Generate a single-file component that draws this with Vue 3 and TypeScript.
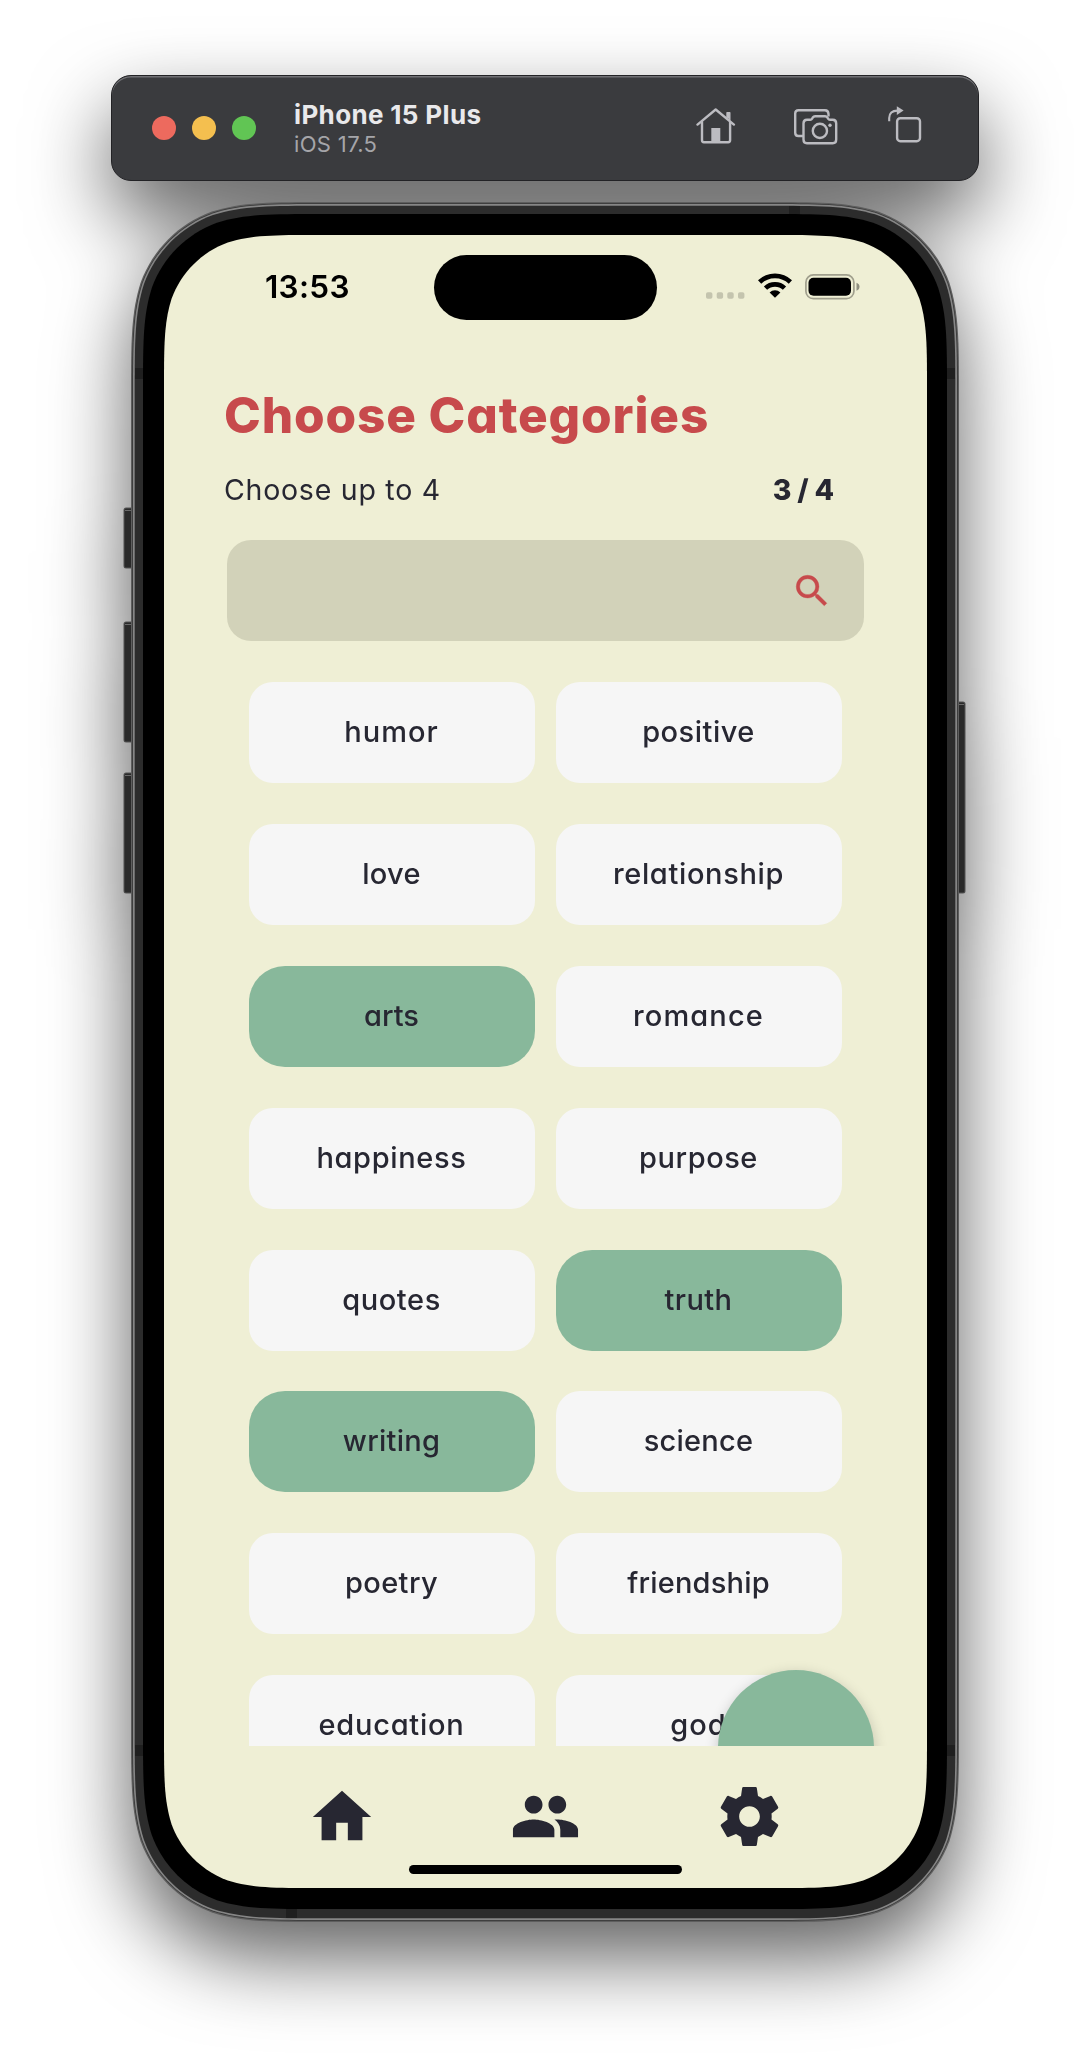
<script setup lang="ts">
interface Category {
  name: string
  selected?: boolean
  tracking: number
}

const categories: Category[] = [
  { name: 'humor', tracking: 1 },
  { name: 'positive', tracking: 0.5 },
  { name: 'love', tracking: 0.3 },
  { name: 'relationship', tracking: 0.65 },
  { name: 'arts', selected: true, tracking: 0 },
  { name: 'romance', tracking: 1.1 },
  { name: 'happiness', tracking: 0.65 },
  { name: 'purpose', tracking: 0.55 },
  { name: 'quotes', tracking: 0.6 },
  { name: 'truth', selected: true, tracking: 0.4 },
  { name: 'writing', selected: true, tracking: 0.25 },
  { name: 'science', tracking: 0.25 },
  { name: 'poetry', tracking: 0.4 },
  { name: 'friendship', tracking: 0.2 },
  { name: 'education', tracking: 0.75 },
  { name: 'god', tracking: 1 },
]

const limit = 4
const chosen = categories.filter((c) => c.selected).length

// Rounded rectangle with continuous-curvature corners.
function squircle(x: number, y: number, w: number, h: number, r: number): string {
  const a = 1.528665 * r
  const b = 1.088493 * r
  const c = 0.868407 * r
  const d = 0.631494 * r
  const e = 0.074911 * r
  const f = 0.372824 * r
  const g = 0.16906 * r
  const R = x + w
  const B = y + h
  return [
    `M${x + a} ${y}H${R - a}`,
    `C${R - b} ${y} ${R - c} ${y} ${R - d} ${y + e}`,
    `C${R - f} ${y + g} ${R - g} ${y + f} ${R - e} ${y + d}`,
    `C${R} ${y + c} ${R} ${y + b} ${R} ${y + a}`,
    `V${B - a}`,
    `C${R} ${B - b} ${R} ${B - c} ${R - e} ${B - d}`,
    `C${R - g} ${B - f} ${R - f} ${B - g} ${R - d} ${B - e}`,
    `C${R - c} ${B} ${R - b} ${B} ${R - a} ${B}`,
    `H${x + a}`,
    `C${x + b} ${B} ${x + c} ${B} ${x + d} ${B - e}`,
    `C${x + f} ${B - g} ${x + g} ${B - f} ${x + e} ${B - d}`,
    `C${x} ${B - c} ${x} ${B - b} ${x} ${B - a}`,
    `V${y + a}`,
    `C${x} ${y + b} ${x} ${y + c} ${x + e} ${y + d}`,
    `C${x + g} ${y + f} ${x + f} ${y + g} ${x + d} ${y + e}`,
    `C${x + c} ${y} ${x + b} ${y} ${x + a} ${y}Z`,
  ].join('')
}

const shell = squircle(-1, -1, 828, 1720, 128)
const rim = squircle(0.2, 0.2, 825.6, 1717.6, 127)
const seam = squircle(1, 1, 824, 1716, 126)
const band = squircle(2.7, 2.7, 820.6, 1712.6, 124)
const bezel = squircle(11, 11, 804, 1695, 117)
const display = squircle(32, 32, 763, 1653, 101)

const sideButtons = [
  { x: -8, y: 305, h: 60 },
  { x: -8, y: 419, h: 120 },
  { x: -8, y: 570, h: 120 },
  { x: 824, y: 499, h: 191 },
]
</script>

<template>
  <div class="simulator">
    <div class="window">
      <header class="toolbar">
        <div class="lights">
          <span class="light close"></span>
          <span class="light minimise"></span>
          <span class="light expand"></span>
        </div>
        <div class="device">
          <div class="device-name">iPhone 15 Plus</div>
          <div class="device-os">iOS 17.5</div>
        </div>
        <div class="tools">
          <svg class="tool-home" width="40" height="36" viewBox="0 0 40 36" fill="none" stroke="#bcbcc1" stroke-width="2.4" stroke-linecap="round" stroke-linejoin="round">
            <path d="M1.5 16.6 19.700 1.500 37.900 16.600" />
            <path d="M6 14v18.300q0 1.900 1.900 1.900h24.300q1.900 0 1.900-1.900V14" />
            <path d="M31 9.500V4.800h2.800v7" fill="#bcbcc1" stroke-width="1.400" />
            <path d="M15.300 20h9v14h-9z" fill="#bcbcc1" stroke="none" />
          </svg>
          <svg class="tool-camera" width="44" height="36" viewBox="0 0 44 36" fill="none" stroke="#bcbcc1" stroke-width="2.400" stroke-linejoin="round">
            <path d="M9 27H4.500Q1.200 27 1.200 23.700V4.500Q1.200 1.200 4.500 1.200H31Q34.300 1.200 34.500 5V7.500" />
            <path d="M9.500 14.500q0-3.700 3.400-3.700h3.300q1.300 0 1.900-1.100l.7-1.200q.8-1.300 2.300-1.300h10q1.500 0 2.300 1.300l.7 1.200q.6 1.100 1.900 1.100h2.800q3.400 0 3.400 3.700v16q0 3.700-3.400 3.700h-25.900q-3.400 0-3.400-3.700z" />
            <circle cx="25.900" cy="21.900" r="7.100" />
            <circle cx="36" cy="16.300" r="1.700" fill="#bcbcc1" stroke="none" />
          </svg>
          <svg class="tool-rotate" width="34" height="37" viewBox="0 0 34 37" fill="none" stroke="#bcbcc1" stroke-width="2.400">
            <rect x="9.100" y="12.200" width="22.900" height="23" rx="3.200" />
            <path d="M1.200 15.300V12Q1.200 4.600 9.500 4.600" stroke-width="2.100" />
            <path d="M8.800 .2 15.600 4.600 8.800 9z" fill="#bcbcc1" stroke="none" />
          </svg>
        </div>
      </header>

      <main class="phone">
        <svg class="chassis" width="846" height="1718" viewBox="-10 0 846 1718">
          <g v-for="b in sideButtons" :key="`${b.x}-${b.y}`">
            <rect :x="b.x - 0.5" :y="b.y - 0.5" width="10" :height="b.h + 1" rx="2.500" fill="#555" />
            <rect :x="b.x + 0.5" :y="b.y + 0.5" width="8" :height="b.h - 1" rx="1.500" fill="#2a2a2a" />
            <rect :x="b.x + 1" :y="b.y + 2" width="7" height="1" fill="#6a6a6a" />
          </g>
          <path :d="shell" fill="#5e5e5e" />
          <path :d="rim" fill="#363636" />
          <path :d="seam" fill="#868686" />
          <path :d="band" fill="#2c2c2c" />
          <g fill="#1f1f1f">
            <rect x="657" y="3" width="11" height="9" />
            <rect x="154" y="1705" width="11" height="10" />
            <rect x="3" y="165" width="9" height="11" />
            <rect x="814" y="165" width="9" height="11" />
            <rect x="3" y="1542" width="9" height="11" />
            <rect x="814" y="1542" width="9" height="11" />
          </g>
          <path :d="bezel" fill="#000" />
          <path :d="display" fill="#efefd5" />
        </svg>

        <div class="screen">
          <div class="status">
            <span class="clock">13:53</span>
            <span class="island"></span>
            <div class="indicators">
              <svg class="cellular" width="39" height="7" viewBox="0 0 39 7" fill="#c4c4ae">
                <rect x="0" y=".3" width="6.400" height="6.400" rx="1.800" />
                <rect x="10.700" y=".3" width="6.400" height="6.400" rx="1.800" />
                <rect x="21.300" y=".3" width="6.400" height="6.400" rx="1.800" />
                <rect x="32" y=".3" width="6.400" height="6.400" rx="1.800" />
              </svg>
              <svg class="wifi" width="34" height="25" viewBox="0 0 34 25">
                <g fill="none" stroke="#000" stroke-width="4.700">
                  <path d="M1.600 9A22.200 22.200 0 0 1 32.400 9" />
                  <path d="M7.500 15.100A13.800 13.800 0 0 1 26.500 15.100" />
                </g>
                <path d="M17 24.800 11.600 19.400A7.700 7.700 0 0 1 22.400 19.400Z" />
              </svg>
              <svg class="battery" width="55" height="26" viewBox="0 0 55 26">
                <rect x=".9" y=".9" width="48" height="23.800" rx="7.500" fill="none" stroke="#a09f8d" stroke-width="1.700" />
                <rect x="3.500" y="3.700" width="42.500" height="18" rx="5" />
                <path d="M51.500 8.800q3 1.200 3 4t-3 4z" fill="#8f8f80" />
              </svg>
            </div>
          </div>

          <section class="content">
            <h1>Choose Categories</h1>
            <div class="summary">
              <span class="hint">Choose up to {{ limit }}</span>
              <span class="count">{{ chosen }} / {{ limit }}</span>
            </div>
            <div class="search">
              <svg width="42" height="42" viewBox="0 0 24 24" fill="#c74a4c">
                <path d="M15.500 14h-.79l-.28-.27A6.471 6.471 0 0 0 16 9.500 6.500 6.500 0 1 0 9.500 16c1.610 0 3.090-.59 4.230-1.570l.27.28v.79l5 4.990L20.490 19l-4.990-5zm-6 0C7.010 14 5 11.990 5 9.500S7.010 5 9.500 5 14 7.010 14 9.500 11.990 14 9.500 14z" stroke="#c74a4c" stroke-width=".2" stroke-linejoin="round" />
              </svg>
            </div>
            <div class="viewport">
              <div class="grid">
                <button
                  v-for="c in categories"
                  :key="c.name"
                  class="category"
                  :class="{ selected: c.selected }"
                  :style="{ letterSpacing: `${c.tracking}px` }"
                >
                  {{ c.name }}
                </button>
              </div>
              <span class="fab"></span>
            </div>
          </section>

          <nav class="tabs">
            <svg class="tab-home" width="70" height="70" viewBox="0 0 24 24"><path d="M10 20v-6h4v6h5v-8h3L12 3 2 12h3v8z" /></svg>
            <svg width="71" height="71" viewBox="0 0 24 24"><path d="M16 11c1.660 0 2.990-1.340 2.990-3S17.660 5 16 5s-3 1.340-3 3 1.340 3 3 3zm-8 0c1.660 0 2.990-1.340 2.990-3S9.660 5 8 5 5 6.340 5 8s1.340 3 3 3zm0 2c-2.330 0-7 1.170-7 3.500V19h14v-2.500c0-2.330-4.670-3.500-7-3.500zm8 0c-.29 0-.62.02-.97.05 1.160.84 1.970 1.970 1.970 3.450V19h6v-2.500c0-2.330-4.670-3.500-7-3.500z" /></svg>
            <svg width="71" height="71" viewBox="0 0 24 24"><path d="M19.430 12.980c.04-.32.07-.64.07-.98s-.03-.66-.07-.98l2.110-1.650c.19-.15.24-.42.12-.64l-2-3.460c-.12-.22-.39-.3-.61-.22l-2.490 1c-.52-.4-1.080-.73-1.690-.98l-.38-2.650C14.460 2.180 14.250 2 14 2h-4c-.25 0-.46.18-.49.42l-.38 2.650c-.61.25-1.170.59-1.690.98l-2.490-1c-.23-.09-.49 0-.61.22l-2 3.460c-.13.22-.07.49.12.64l2.110 1.650c-.04.32-.07.65-.07.98s.03.66.07.98l-2.110 1.650c-.19.15-.24.42-.12.64l2 3.460c.12.22.39.3.61.22l2.490-1c.52.4 1.080.73 1.690.98l.38 2.650c.03.24.24.42.49.42h4c.25 0 .46-.18.49-.42l.38-2.650c.61-.25 1.170-.59 1.690-.98l2.490 1c.23.09.49 0 .61-.22l2-3.460c.12-.22.07-.49-.12-.64l-2.110-1.650zM12 15.500c-1.930 0-3.500-1.570-3.500-3.500s1.570-3.500 3.500-3.500 3.500 1.570 3.500 3.500-1.570 3.500-3.500 3.500z" /></svg>
          </nav>
          <span class="home-bar"></span>
        </div>
      </main>
    </div>
  </div>
</template>

<style>
body {
  background: #fff;
}
</style>

<style scoped>
.simulator {
  box-sizing: border-box;
  width: 1090px;
  height: 2072px;
  overflow: hidden;
  padding: 75px 111px 0;
  background: #fff;
  font-family: Inter, "Liberation Sans", sans-serif;
}
.window {
  filter: drop-shadow(0 36px 40px rgba(0, 0, 0, 0.62));
}
.toolbar {
  box-sizing: border-box;
  display: flex;
  align-items: center;
  height: 106px;
  padding: 0 56px 0 40px;
  border: 1px solid #222225;
  border-radius: 20px;
  background: #3a3b3e;
  box-shadow: inset 0 1.500px 0 #707074;
}
.lights {
  display: flex;
  gap: 16px;
}
.light {
  width: 24px;
  height: 24px;
  border-radius: 50%;
}
.close { background: #ed6a5e; }
.minimise { background: #f4bf4f; }
.expand { background: #61c554; }
.device {
  margin: 2px 0 0 38px;
  white-space: nowrap;
}
.device-name {
  color: #e9e9eb;
  font-size: 26px;
  font-weight: 700;
  line-height: 30px;
  letter-spacing: 0.350px;
}
.device-os {
  color: #a5a5a9;
  font-size: 22px;
  line-height: 29px;
  letter-spacing: 0.350px;
}
.tools {
  display: flex;
  flex: 1;
  justify-content: flex-end;
  align-items: center;
}
.tool-home { margin-top: -4px; }
.tool-camera { margin: -3px 0 0 58px; }
.tool-rotate { margin: -7px 0 0 50px; }
.phone {
  position: relative;
  width: 826px;
  height: 1718px;
  margin: 22px 0 0 21px;
}
.chassis {
  position: absolute;
  top: 0;
  left: -10px;
  overflow: visible;
}
.screen {
  position: relative;
  box-sizing: border-box;
  display: flex;
  flex-direction: column;
  width: 763px;
  height: 1653px;
  margin: 0 32px;
  top: 32px;
}
.status {
  box-sizing: border-box;
  display: flex;
  height: 122px;
  padding: 20px 67px 0 101px;
}
.clock {
  width: 169px;
  color: #000;
  font-size: 31.500px;
  font-weight: 600;
  line-height: 64px;
  letter-spacing: 0.300px;
}
.island {
  width: 223px;
  height: 65px;
  border-radius: 33px;
  background: #000;
}
.indicators {
  display: flex;
  flex: 1;
  justify-content: flex-end;
  align-items: flex-start;
}
.cellular { margin-top: 37px; }
.wifi { margin: 18px 13px 0 13px; }
.battery { margin-top: 19px; }
.content {
  display: flex;
  flex-direction: column;
  height: 1389px;
  color: #272732;
}
h1 {
  margin: 23px 0 0 60px;
  color: #c74a4c;
  font-size: 49.500px;
  font-weight: 800;
  line-height: 70px;
  letter-spacing: 0.870px;
  font-feature-settings: "cv11";
  white-space: nowrap;
}
.summary {
  display: flex;
  justify-content: space-between;
  height: 40px;
  margin: 20px 93px 0 60px;
  font-size: 28.500px;
  line-height: 40px;
}
.hint {
  letter-spacing: 0.750px;
}
.count {
  font-weight: 800;
  letter-spacing: -0.200px;
}
.search {
  box-sizing: border-box;
  display: flex;
  justify-content: flex-end;
  align-items: center;
  height: 101px;
  margin: 30px 63px 0;
  padding-right: 31px;
  border-radius: 24px;
  background: #d2d2b9;
}
.viewport {
  position: relative;
  flex: 1;
  margin-top: 41px;
  overflow: hidden;
}
.grid {
  display: grid;
  grid-template-columns: 286px 286px;
  grid-auto-rows: 101px;
  gap: 40.900px 21px;
  margin-left: 85px;
}
.category {
  padding: 0 1px 1px 0;
  border: 0;
  border-radius: 24px;
  background: #f6f6f6;
  color: #272732;
  font: 500 29px/100px Inter, "Liberation Sans", sans-serif;
  font-feature-settings: "cv11";
}
.selected {
  border-radius: 36px;
  background: #88b89b;
}
.fab {
  position: absolute;
  right: 53px;
  bottom: -80px;
  width: 156px;
  height: 156px;
  border-radius: 50%;
  background: #88b89b;
  box-shadow: 0 4px 14px rgba(0, 0, 0, 0.2);
}
.tabs {
  display: flex;
  gap: 133px;
  margin: 35px 0 0 143px;
  fill: #272732;
}
.tab-home { margin-top: 1px; }
.home-bar {
  width: 273px;
  height: 9px;
  margin: 13px auto 0;
  border-radius: 5px;
  background: #000;
}
</style>
